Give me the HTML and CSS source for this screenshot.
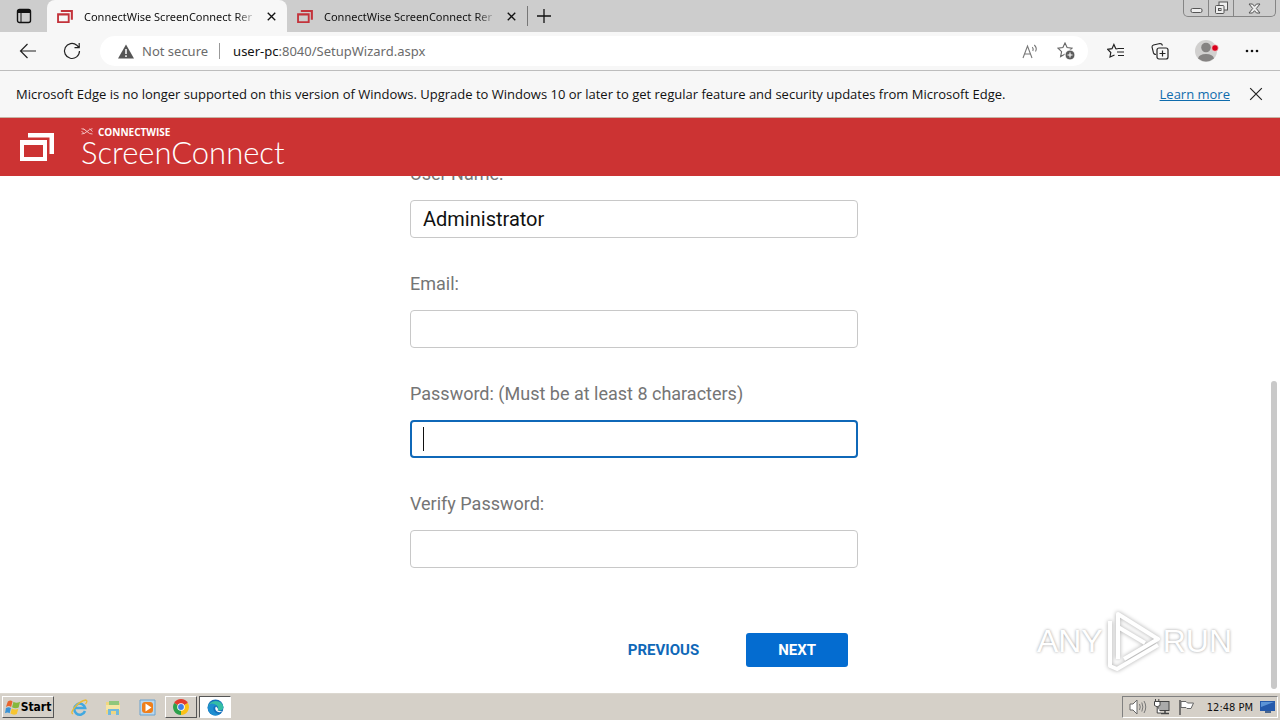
FILE: index.html
```
<!DOCTYPE html>
<html lang="en">
<head>
    <meta charset="UTF-8">
    <meta name="viewport" content="width=device-width, initial-scale=1.0">
    <title>ConnectWise ScreenConnect Remote Support Software</title>
    <link rel="stylesheet" href="styles.css">
</head>
<body>
    <svg class="defs" width="0" height="0" aria-hidden="true">
        <symbol id="windows" viewBox="0 0 34 28">
            <path d="M8 0H34V21H29.500V4.500H8Z"/>
            <path fill-rule="evenodd" d="M0 7H27V28H0ZM4 12V24H23V12Z"/>
        </symbol>
        <symbol id="cross" viewBox="0 0 12 12">
            <path d="M1 1L11 11M11 1L1 11"/>
        </symbol>
        <symbol id="star" viewBox="0 0 16 16">
            <path d="M8 1L10.1 5.6L15 6.2L11.4 9.6L12.4 14.6L8 12.1L3.6 14.6L4.6 9.6L1 6.2L5.900 5.600Z"/>
        </symbol>
    </svg>

    <!-- Tabs -->
    <div class="tabbar">
        <button class="tab-actions" aria-label="Tab actions">
            <svg width="16" height="16" viewBox="0 0 16 16"><rect x="1.5" y="1.5" width="13" height="13" rx="2" fill="none" stroke="#111" stroke-width="1.4"/><path d="M2 2H14V5H2Z" fill="#111"/><path d="M5 5V14" stroke="#111"/></svg>
        </button>
        <div class="tab active">
            <svg class="favicon" width="16" height="13"><use href="#windows"/></svg>
            <span class="tab-title">ConnectWise ScreenConnect Rer</span>
            <button class="tab-close" aria-label="Close tab"><svg width="9" height="9"><use href="#cross"/></svg></button>
        </div>
        <div class="tab">
            <svg class="favicon" width="16" height="13"><use href="#windows"/></svg>
            <span class="tab-title">ConnectWise ScreenConnect Rer</span>
            <button class="tab-close" aria-label="Close tab"><svg width="9" height="9"><use href="#cross"/></svg></button>
        </div>
        <button class="new-tab" aria-label="New tab"><svg width="14" height="14" viewBox="0 0 14 14"><path d="M7 0V14M0 7H14" stroke="#111" stroke-width="1.3"/></svg></button>
        <div class="window-buttons">
            <button aria-label="Minimize"><svg width="13" height="12" viewBox="0 0 13 12"><rect x="1" y="6.500" width="11" height="4" rx="1.500" fill="#eee" stroke="#555"/></svg></button>
            <button aria-label="Restore"><svg width="15" height="14" viewBox="0 0 15 14"><rect x="5" y="1" width="8.500" height="8" fill="#eee" stroke="#555"/><rect x="1.500" y="4.500" width="8.500" height="8" rx="1" fill="#eee" stroke="#555"/><rect x="4.500" y="7.500" width="2.500" height="2" fill="#ccc" stroke="#555"/></svg></button>
            <button class="window-close" aria-label="Close"><svg width="13" height="11" viewBox="0 0 13 11"><path d="M1 1H4.500L6.500 3.300L8.500 1H12L8.300 5.500L12 10H8.500L6.500 7.700L4.500 10H1L4.700 5.500Z" fill="#eee" stroke="#555"/></svg></button>
        </div>
    </div>

    <!-- Address bar -->
    <div class="toolbar">
        <button aria-label="Back"><svg width="18" height="16" viewBox="0 0 18 16"><path d="M17 8H1.500M8.500 1L1.500 8L8.500 15" fill="none" stroke="#222" stroke-width="1.2"/></svg></button>
        <button class="reload" aria-label="Refresh"><svg width="18" height="18" viewBox="0 0 18 18"><path d="M16.500 9A7.500 7.500 0 1 1 13.800 3.200L16 5.500M16.200 1V5.700H11.500" fill="none" stroke="#222" stroke-width="1.2"/></svg></button>
        <div class="address">
            <svg width="16" height="15" viewBox="0 0 16 15"><path d="M8 .5L16 14.500H0Z" fill="#555"/><path d="M8 5V10M8 11.300V13" stroke="#fff" stroke-width="1.500"/></svg>
            <span class="not-secure">Not secure</span>
            <span class="url"><b>user-pc</b>:8040/SetupWizard.aspx</span>
            <button aria-label="Read aloud"><svg width="17" height="16" viewBox="0 0 17 16"><path d="M1 15L5.500 3L10 15M2.600 11H8.500M10.300 4.200Q11.800 6 10.800 8M12.300 2Q15.500 5 13.500 8.500" fill="none" stroke="#777" stroke-width="1.1"/></svg></button>
            <button class="add-fav" aria-label="Add to favorites"><svg width="18" height="18" viewBox="0 0 18 18"><use href="#star" width="16" height="16" fill="none" stroke="#666" stroke-width="1.1"/><circle cx="13" cy="13" r="5" fill="#5c5c5c" stroke="#fff"/><path d="M13 10.500V15.500M10.500 13H15.500" stroke="#fff" stroke-width="1.1"/></svg></button>
        </div>
        <div class="toolbar-icons">
            <button aria-label="Favorites"><svg width="18" height="16" viewBox="0 0 18 16"><path d="M10.500 6L8.800 5.700L6.900 1.500L5 5.700L.7 6.300L3.800 9.500L3 14L7.500 12M10.500 5.500H17M10 9H17M11 12.500H17" fill="none" stroke="#222" stroke-width="1.200"/></svg></button>
            <button aria-label="Collections"><svg width="18" height="18" viewBox="0 0 18 18"><path d="M5 12.500Q3 12.500 2.500 11L1 5Q1 3.500 2.500 3L9 1.500Q11 1.500 11.500 3.500" fill="none" stroke="#222" stroke-width="1.1"/><rect x="6" y="6" width="11" height="11" rx="2" fill="#f7f7f7" stroke="#222" stroke-width="1.2"/><path d="M11.500 8.500V14.500M8.500 11.500H14.500" stroke="#222" stroke-width="1.2"/></svg></button>
            <button aria-label="Profile"><svg width="24" height="24" viewBox="0 0 24 24"><circle cx="11" cy="12" r="11" fill="#d1d0cf"/><circle cx="11" cy="8.500" r="4.800" fill="#858382"/><path d="M3 19.500Q4 15 11 15T19 19.500Q11 25.500 3 19.500Z" fill="#858382"/><circle cx="20" cy="9" r="3.300" fill="#d9001b" stroke="#f2dede" stroke-width=".7"/></svg></button>
            <button aria-label="Settings and more"><svg width="14" height="4" viewBox="0 0 14 4"><g fill="#111"><circle cx="2" cy="2" r="1.300"/><circle cx="7" cy="2" r="1.300"/><circle cx="12" cy="2" r="1.300"/></g></svg></button>
        </div>
    </div>

    <div class="notice">
        <span>Microsoft Edge is no longer supported on this version of Windows. Upgrade to Windows 10 or later to get regular feature and security updates from Microsoft Edge.</span>
        <a href="#">Learn more</a>
        <button aria-label="Dismiss"><svg width="14" height="14"><use href="#cross"/></svg></button>
    </div>

    <!-- Page header -->
    <header class="header">
        <svg width="34" height="28"><use href="#windows"/></svg>
        <div class="brand">
            <div class="brand-top">
                <svg width="12" height="7" viewBox="0 0 11 7"><path d="M0 .7Q3 .7 5.500 3.500T11 6M0 6Q3 6 5.500 3.500T11 .7M0 3L3 6M8 .7L11 3.500M2 .7L4 2.500" fill="none" stroke="#f5c9c9" stroke-width=".9"/></svg>
                <span>CONNECTWISE</span>
            </div>
            <div class="brand-name">ScreenConnect</div>
        </div>
    </header>

    <main class="page">
        <form class="wizard">
            <div class="field">
                <label for="username">User Name:</label>
                <input type="text" id="username" value="Administrator">
            </div>
            <div class="field">
                <label for="email">Email:</label>
                <input type="text" id="email">
            </div>
            <div class="field">
                <label for="password">Password: (Must be at least 8 characters)</label>
                <div class="input-wrap">
                    <input type="password" id="password" class="focused">
                    <span class="caret"></span>
                </div>
            </div>
            <div class="field">
                <label for="verify">Verify Password:</label>
                <input type="password" id="verify">
            </div>
            <div class="buttons">
                <button type="button" class="previous">PREVIOUS</button>
                <button type="button" class="next">NEXT</button>
            </div>
        </form>
        <div class="scrollbar"><div class="thumb"></div></div>
        <div class="watermark">
            <span>ANY</span>
            <svg width="60" height="64" viewBox="0 0 60 64"><g fill="none" stroke="#fff" stroke-width="4" stroke-linejoin="round"><path d="M15 50V5L55 30L21 50"/><path d="M7 12V57L14 60L55 36"/><path d="M15 18L42 34"/></g></svg>
            <span>RUN</span>
        </div>
    </main>

    <!-- Taskbar -->
    <div class="taskbar">
        <button class="start">
            <svg width="16" height="17" viewBox="0 0 17 17"><path d="M3 2Q6 0 8 2L6.500 8Q4 6 1 8Z" fill="#e8642c"/><path d="M9 2.500Q12 4.500 16 2.500L14.500 8.500Q11 10 7.500 8.200Z" fill="#85b83c"/><path d="M1 9Q4 7.500 6.300 9L5 14.500Q2.500 13 0 14.500Z" fill="#3a93d6"/><path d="M7.200 9.500Q11 11.500 14.200 9.800L12.500 15.500Q9 17 5.800 15Z" fill="#f7c531"/></svg>
            Start
        </button>
        <div class="quick">
            <button aria-label="Internet Explorer"><svg width="17" height="17" viewBox="0 0 17 17"><path d="M14 12A5.500 5.500 0 1 1 14.200 9H4" fill="none" stroke="#42a8e0" stroke-width="2.500"/><path d="M2 15Q-1 14 4 8T15 1Q17 2 14.500 5" fill="none" stroke="#e9bb36" stroke-width="1.300"/></svg></button>
            <button aria-label="Explorer"><svg width="17" height="17" viewBox="0 0 17 17"><path d="M1 3H6L7 4H15V15H1Z" fill="#f0d681"/><path d="M4 2H14V6H4Z" fill="#8fc77c"/><path d="M1 6H15V11H1Z" fill="#f6e6a4"/><path d="M3 16V10H14V16H11V12H6V16Z" fill="#72b9dc"/></svg></button>
            <button aria-label="Media Player"><svg width="17" height="17" viewBox="0 0 17 17"><path d="M1 1H16V16H1Z" fill="#b9d7ee" stroke="#6ba3cf"/><rect x="3" y="3" width="11" height="11" rx="3" fill="#ef7f1b"/><path d="M6.500 4.500L12.500 8.500L6.500 12.500Z" fill="#fff"/></svg></button>
        </div>
        <button class="task" aria-label="Chrome"><svg width="16" height="16" viewBox="0 0 16 16"><path d="M8 8L1.100 4A8 8 0 0 1 14.900 4Z" fill="#e33b2e"/><path d="M8 8L14.900 4A8 8 0 0 1 8 16Z" fill="#fbc116"/><path d="M8 8L8 16A8 8 0 0 1 1.100 4Z" fill="#2da14c"/><circle cx="8" cy="8" r="3.800" fill="#fff"/><circle cx="8" cy="8" r="2.900" fill="#3f7ee8"/></svg></button>
        <button class="task pressed" aria-label="Edge"><svg width="17" height="17" viewBox="0 0 17 17"><circle cx="8.500" cy="8.500" r="8" fill="#1470bd"/><path d="M1 8A8 8 0 0 1 16.500 8Q16 12 11 11.500Q12 6 7 5.500Q3 5 1 8Z" fill="#35bea5"/><path d="M1 8Q4 2 9.500 6.500Q5 7 7 12Q9 15 13 15Q8 18 4 15T1 8Z" fill="#1d8ed0"/><path d="M9 7.500Q7 10 10 12.500Q13 14 16 12Q13 12.500 10.500 11.500Q12 10 9 7.500Z" fill="#fff"/></svg></button>
        <div class="tray">
            <svg width="18" height="16" viewBox="0 0 18 16"><path d="M1 5H4L8 1V15L4 11H1Z" fill="#fff" stroke="#666"/><path d="M10.500 5Q12 8 10.500 11M12.800 3.500Q15 8 12.800 12.500M15 2Q18.500 8 15 14" fill="none" stroke="#777"/></svg>
            <svg width="17" height="16" viewBox="0 0 17 16"><rect x="4" y="2.500" width="11" height="9" fill="#aaa" stroke="#444"/><path d="M7 14.500H15M11 11.500V14" stroke="#444" stroke-width="1.500"/><path d="M.5 2.500H6V6.500Q3 9 .5 6.500ZM1.500 0V3M4.800 0V3M3.200 8V14H7" fill="#fff" stroke="#444"/></svg>
            <svg width="17" height="16" viewBox="0 0 17 16"><path d="M2 1V16" stroke="#555" stroke-width="1.500"/><path d="M3 2.500H8L9.500 4H15.500L13 9.500H9L8 8.500H3Z" fill="#fff" stroke="#666"/></svg>
            <span class="clock">12:48 PM</span>
            <svg width="16" height="14" viewBox="0 0 16 14"><path d="M0 1H15V11H0Z" fill="#2459ab"/><path d="M1 2H14L1 7Z" fill="#5b93d6"/><path d="M5 11H11V13H5Z" fill="#4a668d"/></svg>
        </div>
    </div>
</body>
</html>
```
FILE: styles.css
```
* {
    box-sizing: border-box;
}
body {
    margin: 0;
    height: 100vh;
    display: flex;
    flex-direction: column;
    overflow: hidden;
    background-color: #fff;
    font-family: "Noto Sans", "Open Sans", sans-serif;
    font-size: 13px;
    color: #111;
}
button {
    border: none;
    background: none;
    padding: 0;
    font-family: inherit;
    display: flex;
    align-items: center;
    justify-content: center;
}
svg {
    flex-shrink: 0;
}
.defs {
    position: absolute;
}

/* Tabs */
.tabbar {
    display: flex;
    align-items: center;
    height: 32px;
    background-color: #cdcdcd;
}
.tab-actions {
    width: 47px;
}
.tab {
    display: flex;
    align-items: center;
    width: 240px;
    height: 32px;
    padding: 0 10px;
    border-radius: 8px 8px 0 0;
}
.tab.active {
    background-color: #f7f7f7;
}
.favicon {
    fill: #c3333b;
}
.tab-title {
    flex: 1;
    margin: 0 8px 0 11px;
    font-size: 11px;
    white-space: nowrap;
    overflow: hidden;
    mask-image: linear-gradient(to right, #000 88%, transparent);
}
.tab-close {
    width: 12px;
    height: 16px;
    stroke: #111;
    stroke-width: 1.8;
}
.new-tab {
    height: 20px;
    padding-left: 9px;
    border-left: 1px solid #777;
}
.window-buttons {
    display: flex;
    align-self: flex-start;
    height: 17px;
    margin-left: auto;
    margin-right: 4px;
    border: 1px solid #858585;
    border-top: none;
    border-radius: 0 0 5px 5px;
}
.window-buttons button {
    width: 25px;
    border-right: 1px solid #858585;
}
.window-buttons .window-close {
    width: 41px;
    border-right: none;
}

/* Address bar */
.toolbar {
    display: flex;
    align-items: center;
    height: 39px;
    padding-left: 19px;
    background-color: #f7f7f7;
    border-bottom: 1px solid #bdbdbd;
}
.reload {
    margin: 0 19px 0 26px;
}
.address {
    flex: 1;
    display: flex;
    align-items: center;
    height: 30px;
    padding: 0 13px 0 18px;
    border-radius: 15px;
    background-color: #fff;
    color: #6b6b6b;
}
.not-secure {
    margin-left: 8px;
    padding-right: 11px;
    line-height: 16px;
    border-right: 1px solid #999;
}
.url {
    flex: 1;
    margin-left: 13px;
}
.url b {
    font-weight: normal;
    color: #111;
}
.add-fav {
    margin-left: 18px;
}
.toolbar-icons {
    display: flex;
    align-items: center;
    gap: 26px;
    padding: 0 21px 0 19px;
}

/* Unsupported version message */
.notice {
    display: flex;
    align-items: center;
    height: 47px;
    padding: 0 17px 0 16px;
    background-color: #f7f7f7;
    border-bottom: 1px solid #c6b5a5;
    font-family: "Open Sans", sans-serif;
    white-space: nowrap;
}
.notice a {
    margin-left: auto;
    color: #0f6cad;
}
.notice button {
    margin-left: 19px;
    stroke: #222;
}

/* Page header */
.header {
    display: flex;
    align-items: center;
    height: 58px;
    padding: 0 20px 1px;
    background-color: #cc3333;
    color: #fff;
    fill: #fff;
}
.brand {
    margin-left: 27px;
}
.brand-top {
    display: flex;
    align-items: center;
    gap: 5px;
    font-family: "Open Sans", sans-serif;
    font-size: 10px;
    font-weight: 700;
    line-height: 10px;
}
.brand-name {
    font-family: Lato, sans-serif;
    font-size: 31px;
    font-weight: 300;
    line-height: 30px;
}

/* Setup wizard, scrolled to its end */
.page {
    flex: 1;
    min-height: 0;
    display: flex;
    align-items: flex-end;
    position: relative;
    overflow: hidden;
}
.wizard {
    width: 448px;
    margin: 0 auto;
    padding-bottom: 26px;
    font-family: Roboto, sans-serif;
}
.field {
    margin-bottom: 34px;
}
.field label {
    display: block;
    margin-bottom: 14px;
    font-size: 18px;
    line-height: 24px;
    color: #757575;
}
.field input {
    display: block;
    width: 100%;
    height: 38px;
    padding: 0 12px;
    border: 1px solid #c8c8c8;
    border-radius: 4px;
    outline: none;
    background-color: #fff;
    font-family: Roboto, sans-serif;
    font-size: 20px;
    color: #111;
}
.field .focused {
    border: 2px solid #0f68b8;
}
.input-wrap {
    position: relative;
}
.caret {
    position: absolute;
    left: 13px;
    top: 7px;
    width: 1px;
    height: 24px;
    background-color: #111;
}
.buttons {
    display: flex;
    justify-content: flex-end;
    margin-top: 65px;
    padding-right: 10px;
}
.buttons button {
    height: 34px;
    padding: 0 32px;
    border-radius: 3px;
    font-size: 15px;
    font-weight: 700;
}
.buttons .previous {
    margin-right: 15px;
    color: #0f68b8;
}
.buttons .next {
    background-color: #046cd0;
    color: #fff;
}
.scrollbar {
    display: flex;
    align-items: flex-end;
    justify-content: center;
    width: 12px;
    height: 100%;
    padding-bottom: 4px;
}
.thumb {
    width: 6px;
    height: 60%;
    border-radius: 3px;
    background-color: #c9c9c9;
}
.watermark {
    position: absolute;
    right: 48px;
    bottom: 20px;
    display: flex;
    align-items: center;
    font-family: "Liberation Sans Narrow", "Liberation Sans", sans-serif;
    font-size: 32px;
    color: #fff;
    text-shadow: 0 0 3px #999;
}
.watermark svg {
    filter: drop-shadow(0 0 2px #aaa);
}

/* Taskbar */
.taskbar {
    display: flex;
    align-items: center;
    height: 27px;
    padding: 0 2px;
    border-top: 1px solid #dcd8d0;
    background-color: #d5d0c8;
    font-family: "DejaVu Sans Condensed", "DejaVu Sans", sans-serif;
    font-size: 11px;
}
.start {
    width: 52px;
    height: 22px;
    border: 1px solid;
    border-color: #fff #555 #555 #fff;
    font-size: 12px;
    font-weight: bold;
}
.quick {
    display: flex;
    gap: 17px;
    margin: 0 9px 0 17px;
}
.task {
    width: 32px;
    height: 22px;
    margin-right: 2px;
    border: 1px solid;
    border-color: #fff #555 #555 #fff;
}
.task.pressed {
    border-color: #555 #fff #fff #555;
    background-color: #fff;
}
.tray {
    display: flex;
    align-items: center;
    gap: 7px;
    height: 22px;
    margin-left: auto;
    padding: 0 1px 0 6px;
    border: 1px solid;
    border-color: #808080 #fff #fff #808080;
}
.clock {
    margin-left: 5px;
    white-space: nowrap;
}
```
